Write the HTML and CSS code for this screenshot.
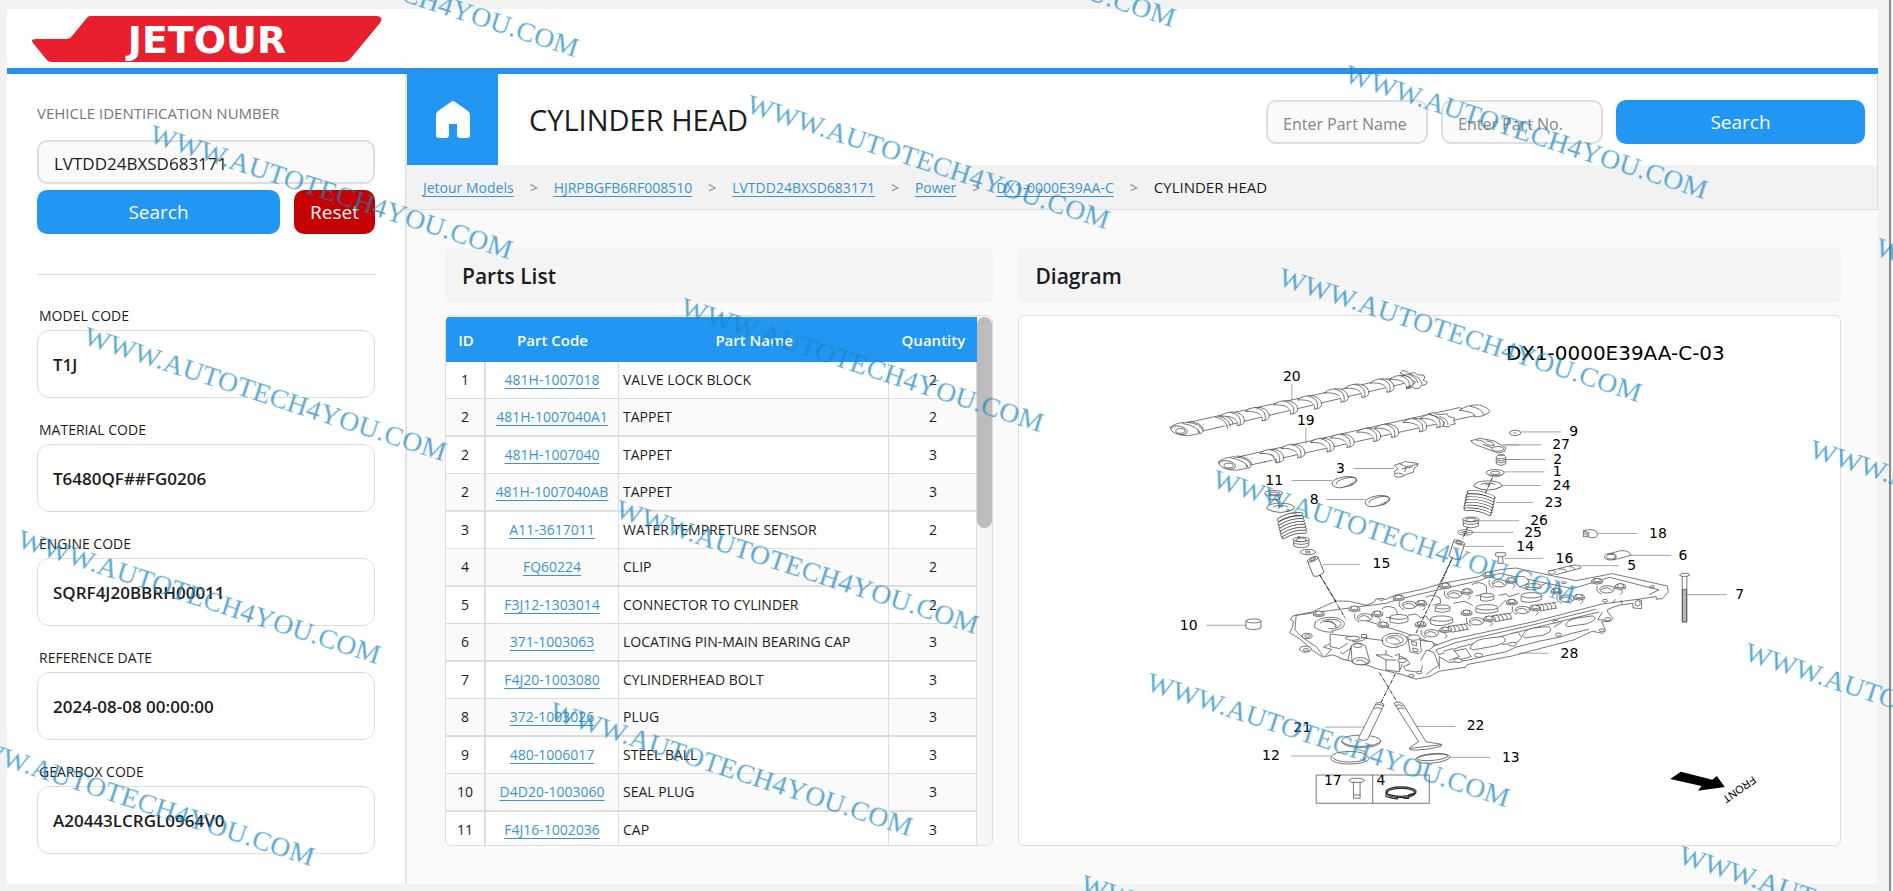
FILE: index.html
```html
<!DOCTYPE html>
<html lang="en">
<head>
<meta charset="utf-8">
<meta name="viewport" content="width=device-width, initial-scale=1">
<title>CYLINDER HEAD - Jetour</title>
<link rel="stylesheet" href="styles.css">
</head>
<body>
<div class="window">
<div class="app">
  <header class="brand">
    <svg class="logo" viewBox="0 0 350 46" role="img" aria-label="Jetour">
      <path d="M58 0H345Q352 1 348 7L319 42Q316 46 311 46H19Q16 46 14 43L1 27Q-2 23 4 23H35Q38 23 40 20L54 3Q56 0 58 0Z" fill="#e8202e"/>
      <text x="175" y="37" text-anchor="middle">JETOUR</text>
    </svg>
  </header>

  <div class="columns">
    <aside class="sidebar">
      <form class="vin">
        <label class="vin-label" for="vin">VEHICLE IDENTIFICATION NUMBER</label>
        <input class="field" id="vin" type="text" value="LVTDD24BXSD683171">
        <div class="vin-actions">
          <button class="btn" type="button">Search</button>
          <button class="btn btn-reset" type="button">Reset</button>
        </div>
      </form>
      <hr class="rule">
      <dl class="specs">
        <div><dt>MODEL CODE</dt><dd>T1J</dd></div>
        <div><dt>MATERIAL CODE</dt><dd>T6480QF##FG0206</dd></div>
        <div><dt>ENGINE CODE</dt><dd>SQRF4J20BBRH00011</dd></div>
        <div><dt>REFERENCE DATE</dt><dd>2024-08-08 00:00:00</dd></div>
        <div><dt>GEARBOX CODE</dt><dd>A20443LCRGL0964V0</dd></div>
      </dl>
    </aside>

    <main class="main">
      <div class="titlebar">
        <a class="home" href="#" aria-label="Home">
          <svg viewBox="0 0 34 38" aria-hidden="true"><path d="M15 1Q17-1 19 1L32 10Q34 12 34 14V34Q34 37 31 37H24Q21 37 21 34V23H13V34Q13 37 10 37H3Q0 37 0 34V14Q0 12 2 10Z" fill="#fff"/></svg>
        </a>
        <h1>CYLINDER HEAD</h1>
        <form class="part-search">
          <input class="field" type="text" placeholder="Enter Part Name" aria-label="Enter Part Name">
          <input class="field" type="text" placeholder="Enter Part No." aria-label="Enter Part No.">
          <button class="btn" type="button">Search</button>
        </form>
      </div>

      <nav class="crumbs" aria-label="Breadcrumb">
        <a href="#">Jetour Models</a><span class="sep">&gt;</span>
        <a href="#">HJRPBGFB6RF008510</a><span class="sep">&gt;</span>
        <a href="#">LVTDD24BXSD683171</a><span class="sep">&gt;</span>
        <a href="#">Power</a><span class="sep">&gt;</span>
        <a href="#">DX1-0000E39AA-C</a><span class="sep">&gt;</span>
        <span class="current">CYLINDER HEAD</span>
      </nav>

      <div class="panels">
        <section class="panel">
          <h2>Parts List</h2>
          <div class="box parts">
            <div class="table-wrap">
              <table>
                <colgroup><col class="c-id"><col class="c-code"><col><col class="c-qty"></colgroup>
                <thead><tr><th>ID</th><th>Part Code</th><th>Part Name</th><th>Quantity</th></tr></thead>
                <tbody>
                  <tr><td>1</td><td><a href="#">481H-1007018</a></td><td>VALVE LOCK BLOCK</td><td>2</td></tr>
                  <tr><td>2</td><td><a href="#">481H-1007040A1</a></td><td>TAPPET</td><td>2</td></tr>
                  <tr><td>2</td><td><a href="#">481H-1007040</a></td><td>TAPPET</td><td>3</td></tr>
                  <tr><td>2</td><td><a href="#">481H-1007040AB</a></td><td>TAPPET</td><td>3</td></tr>
                  <tr><td>3</td><td><a href="#">A11-3617011</a></td><td>WATER TEMPRETURE SENSOR</td><td>2</td></tr>
                  <tr><td>4</td><td><a href="#">FQ60224</a></td><td>CLIP</td><td>2</td></tr>
                  <tr><td>5</td><td><a href="#">F3J12-1303014</a></td><td>CONNECTOR TO CYLINDER</td><td>2</td></tr>
                  <tr><td>6</td><td><a href="#">371-1003063</a></td><td>LOCATING PIN-MAIN BEARING CAP</td><td>3</td></tr>
                  <tr><td>7</td><td><a href="#">F4J20-1003080</a></td><td>CYLINDERHEAD BOLT</td><td>3</td></tr>
                  <tr><td>8</td><td><a href="#">372-1003026</a></td><td>PLUG</td><td>3</td></tr>
                  <tr><td>9</td><td><a href="#">480-1006017</a></td><td>STEEL BALL</td><td>3</td></tr>
                  <tr><td>10</td><td><a href="#">D4D20-1003060</a></td><td>SEAL PLUG</td><td>3</td></tr>
                  <tr><td>11</td><td><a href="#">F4J16-1002036</a></td><td>CAP</td><td>3</td></tr>
                </tbody>
              </table>
            </div>
            <div class="scrollbar"><div class="thumb"></div></div>
          </div>
        </section>

        <section class="panel">
          <h2>Diagram</h2>
          <div class="box diagram">
            <svg viewBox="3057 948 2466 1587" role="img" aria-label="Exploded view of the cylinder head">
              <defs>
                <g id="lobe"><path d="M-38-6Q-20-22 10-18Q36-10 34 10Q32 20 12 22Q18 10 4 1Q-10-8-38-6Z"/><path d="M-8-18Q20-12 22 6Q24 14 20 20"/></g>
                <g id="cap"><path d="M-16 0V7Q0 14 16 7V0"/><ellipse rx="16" ry="6"/><ellipse rx="9" ry="3"/><path d="M-9 2V-5Q0-9 9-5V2"/></g>
                <g id="bore"><ellipse rx="22" ry="11"/><path d="M-19 2Q-10-6 0-5Q14-3 16 7"/><path d="M-30-10Q-34 8-16 14M20-8L38-2L48 8L40 16"/></g>
                <g id="spring"><path d="M-28-36Q0-50 28-36Q34-30 28-26Q0-38-26-26Q-34-28-28-36ZM-28-24Q0-38 28-26M-28-14Q2-28 28-16M-28-4Q2-18 28-6M-28 6Q2-8 28 4M-28 16Q2 2 28 14M-28 26Q2 12 28 24M-26 34Q2 22 26 34M-28-24Q-34-16-28-14M28-26Q34-18 28-16M-28-14Q-34-6-28-4M28-16Q34-8 28-6M-28-4Q-34 4-28 6M28-6Q34 2 28 4M-28 6Q-34 14-28 16M28 4Q34 12 28 14M-28 16Q-34 24-28 26M28 14Q34 22 28 24M-28 26Q-32 32-26 34M28 24Q32 30 26 34"/></g>
                <g id="washer"><ellipse rx="41" ry="13"/><ellipse rx="22" ry="6"/><ellipse rx="7" ry="3"/><path d="M-41 0V4Q0 26 41 4V0"/></g>
                <g id="small-ring"><ellipse rx="23" ry="8"/><ellipse rx="8" ry="3"/></g>
                <g id="seal"><path d="M-24-8L-22 12Q0 22 22 12L24-8"/><ellipse cy="-8" rx="24" ry="7"/><ellipse cy="-8" rx="14" ry="4"/><path d="M-18-6Q0 4 18-6M-23 2Q0 12 23 2"/></g>
                <g id="ring"><ellipse rx="38" ry="15" transform="rotate(-9)"/><ellipse cx="5" cy="1" rx="31" ry="11" transform="rotate(-14)"/><path d="M-36 8Q-32 18-12 18L26 8"/></g>
                <g id="coil"><path d="M-30-8Q-18-2-22 10M-20-10Q-6-4-10 8M-8-10Q6-4 2 7M4-12Q18-6 14 5M16-14Q30-8 26 3M-32-6L28-15M-22 11L30 2"/></g>
              </defs>

              <!-- camshafts, springs and rings -->
              <g class="ink" transform="translate(3360 960)">
                <path d="M180 312L870 162L910 176L200 344Z"/>
                <path d="M325 417L1020 262L1085 282L340 446Z"/>
                <g id="shaft-nose"><path d="M150 322Q166 308 196 306L210 310Q236 318 238 340L206 346Q170 348 150 322Z"/><ellipse cx="178" cy="330" rx="25" ry="12" transform="rotate(12 178 330)"/><ellipse cx="182" cy="332" rx="14" ry="7"/><path d="M196 306Q246 308 250 334L242 341Q236 318 188 309M206 303Q244 306 252 328M286 290Q320 296 324 325M294 287Q330 294 332 320M306 284Q340 292 340 314M252 310v3M290 320v3"/></g>
                <use href="#shaft-nose" x="145" y="104"/>
                <use href="#lobe" x="340" y="294"/><use href="#lobe" x="415" y="280"/><use href="#lobe" x="500" y="260"/><use href="#lobe" x="572" y="245"/><use href="#lobe" x="652" y="224"/><use href="#lobe" x="714" y="210"/><use href="#lobe" x="790" y="194"/><use href="#lobe" x="848" y="184"/>
                <path d="M842 158l8-8 14 4 4 5 18-2 8 6 20 2 3 8-6 6 13 6-5 8-14 2-4 8-14 2-8-6-17 2Q900 190 884 176Z"/><path d="M858 160Q890 166 896 188M870 160Q904 170 908 192"/>
                <use href="#lobe" x="458" y="406"/><use href="#lobe" x="522" y="391"/><use href="#lobe" x="610" y="373"/><use href="#lobe" x="670" y="360"/><use href="#lobe" x="750" y="342"/><use href="#lobe" x="804" y="330"/><use href="#lobe" x="888" y="313"/><use href="#lobe" x="940" y="301"/>
                <path d="M928 280l14-3 12 6 30-2 4 8 18 4-3 8 6 10-14 2-6 7-18-2Q990 300 928 280Z"/><path d="M960 288Q988 298 986 314"/>
                <path d="M1020 270Q1046 252 1080 254Q1108 262 1112 274Q1096 290 1064 290Q1076 276 1020 270ZM1052 258Q1090 264 1094 284"/>
                <path class="lead" d="M517 192V242M559 321V372M702 445H825M516 481H638M620 538H738M610 733H722M1152 374H1200M1160 418H1200"/>
                <path d="M825 435L848 428L856 424L896 430L894 438L884 444L882 456L862 462L850 468L830 464L824 454L836 446ZM840 430L860 440L896 432M860 440L856 456M848 446L880 440"/><ellipse cx="838" cy="465" rx="14" ry="6"/>
                <use href="#ring" x="675" y="485"/><use href="#ring" x="774" y="542"/>
                <path d="M436 520L448 538H478L488 520"/><ellipse cx="462" cy="519" rx="27" ry="8"/><ellipse cx="462" cy="520" rx="13" ry="4"/>
                <use href="#washer" x="483" y="562"/><use href="#spring" transform="translate(518 618) rotate(-14) scale(1.3 .9)"/><use href="#seal" x="545" y="666"/><use href="#small-ring" x="565" y="696"/>
                <g transform="translate(588 738) rotate(-22)"><path d="M-17-22V26Q0 36 17 26V-22"/><ellipse cy="-22" rx="17" ry="6"/><ellipse cy="-22" rx="10" ry="3"/></g>
                <path d="M1054 362L1082 354L1124 362L1160 382L1156 394L1136 398L1098 384L1070 374ZM1070 360Q1092 358 1104 374L1126 376Q1124 364 1100 362M1090 372L1140 390"/><ellipse cx="1136" cy="386" rx="18" ry="7"/>
                <path d="M1131 412V430Q1146 440 1160 430V412"/><ellipse cx="1146" cy="410" rx="14" ry="6"/><path d="M1131 418Q1146 426 1160 418M1131 424Q1146 432 1160 424M1138 404h16"/>
                <path d="M1102 458L1114 468H1142L1154 458"/><ellipse cx="1128" cy="457" rx="27" ry="9"/><ellipse cx="1128" cy="458" rx="14" ry="5"/>
                <use href="#washer" x="1106" y="495"/><use href="#spring" transform="translate(1080 550) rotate(12) scale(1.4 .86)"/><use href="#seal" x="1055" y="606"/><use href="#small-ring" x="1038" y="637"/>
                <g transform="translate(1013 688) rotate(18)"><path d="M-17-22V26Q0 34 17 26V-22"/><ellipse cy="-22" rx="17" ry="6"/><ellipse cy="-22" rx="10" ry="3"/></g>
                <path class="axis" d="M468 536L478 552M538 648V656M1120 472L1098 520M1046 620L1030 656M1000 712L930 870M600 764L672 880"/>
              </g>

              <!-- bolts, sleeves and pins on the right -->
              <g class="ink" transform="translate(4440 960)">
                <path class="lead" d="M126 335H246M76 374H186M80 418H198M72 455H196M66 496H186M50 547H162M-20 602H120M-58 637H102M-44 679H75M76 715H192M300 737H420M356 640H474M456 706H576M622 824H744"/>
                <ellipse cx="108" cy="338" rx="17" ry="8"/><path d="M104 337l8 3"/>
                <path d="M50 698H78L80 706L70 710L72 730H56L58 710L48 706ZM58 710H70"/>
                <path d="M207 754L278 736Q300 732 306 744L230 764M240 748Q262 744 262 756M270 740Q282 738 288 748"/><ellipse cx="218" cy="757" rx="11" ry="6"/>
                <path d="M313 632V650H328M313 632Q340 624 352 634Q360 646 350 652Q336 656 328 650M313 632L330 638L328 650M318 636v10M324 638v10"/>
                <path d="M380 704L424 692Q452 690 456 706L402 720"/><ellipse cx="394" cy="710" rx="18" ry="10"/><ellipse cx="396" cy="710" rx="13" ry="7"/>
                <path d="M602 766L608 760H628L632 766L624 769H610ZM610 769V906H624V769"/><path d="M611 808H623V906H611Z" fill="#bbb"/>
              </g>

              <!-- cylinder head casting, valves and seats -->
              <g class="ink" transform="translate(3660 1620)">
                <path d="M220 228L278 216L320 196L352 183L390 184L440 196L465 186L470 177L500 178L530 165L612 147L668 130L780 110L800 98L850 88L890 84L1070 122L1180 101L1345 138L1348 156L1330 176L1312 178V170L1256 178L1268 182V206L1242 204V190L1200 196L1166 208V216L1182 236L1174 244L1148 246L1160 272L1150 280L1120 274L1064 300L985 320L880 348L744 374L740 382L660 394L630 410L590 418L548 404L470 386L450 378L380 360L340 345L310 352L280 332L240 296L210 278L218 264L222 244L212 238Z"/>
                <path d="M230 226L226 270L248 292L292 322L310 348M230 226L330 212L500 190L530 180L620 158L780 122L840 100L1060 146L1172 112L1320 150L1290 164M332 282L640 320L700 298L940 246L1150 192L1256 178M440 242L560 280L655 315M332 282V320L360 326L385 310M650 330L658 345L720 322L945 264L1140 216M650 330L710 308L945 254L1130 208"/>
                <path d="M660 350L660 388M560 290L590 300L640 306L645 318L630 330L640 350L616 352L604 398L560 392L552 380L572 372L560 356L540 348M470 345L500 360V390L540 396L548 372M500 360L560 362M470 345H500M400 320L370 342L362 336M360 355L385 362L395 320M318 348L336 328L312 322L330 312"/>
                <path d="M395 318Q412 300 438 318L452 368Q430 382 398 368Z"/><ellipse cx="423" cy="364" rx="24" ry="11"/><ellipse cx="415" cy="317" rx="13" ry="6"/><path d="M410 364Q424 354 440 370"/>
                <ellipse cx="332" cy="252" rx="43" ry="20"/><ellipse cx="334" cy="252" rx="31" ry="14"/><path d="M312 246Q336 236 352 258M320 244Q344 244 350 264M288 242L285 262Q310 280 344 276"/>
                <ellipse cx="526" cy="300" rx="38" ry="20"/><ellipse cx="526" cy="300" rx="26" ry="13"/><path d="M508 296Q528 286 544 308M490 300V312Q506 326 536 322"/>
                <path d="M566 294L572 336L598 342L606 334L602 296ZM576 304L592 308V318L578 314ZM580 324L596 328V336L582 334Z"/><ellipse cx="584" cy="293" rx="19" ry="8"/>
                <path d="M400 290V306L430 302L442 290M426 284H442V294H426ZM500 330V344L520 352M526 348L540 342V392M604 362L622 330L644 338L658 376L620 404"/><ellipse cx="400" cy="295" rx="22" ry="6"/>
                <ellipse cx="263" cy="288" rx="15" ry="8"/><ellipse cx="264" cy="288" rx="8" ry="4"/><ellipse cx="258" cy="328" rx="18" ry="9"/><ellipse cx="260" cy="330" rx="9" ry="4"/><ellipse cx="600" cy="398" rx="8" ry="4"/><ellipse cx="576" cy="408" rx="9" ry="4"/><ellipse cx="548" cy="362" rx="13" ry="6"/>
                <path d="M752 326Q760 302 796 296L848 290Q862 294 856 306Q846 316 806 322L762 330ZM910 288Q914 270 944 264L988 260Q1000 264 992 276L972 286L918 294ZM1040 256Q1042 240 1076 234L1120 228Q1134 232 1124 242L1102 252L1046 260ZM672 334L700 326L720 350L690 362M704 334L740 326L756 350L720 360M872 282L896 276L908 294L890 310L850 314M1004 262L1030 246M658 350L690 368L740 362L800 348L860 336L890 322L960 304L1020 292L1060 280L1110 268M1150 216L1136 240L1170 240M1180 190L1190 178M1206 180L1210 194"/>
                <ellipse cx="716" cy="362" rx="12" ry="6"/><ellipse cx="778" cy="346" rx="12" ry="6"/><ellipse cx="880" cy="313" rx="12" ry="6"/><ellipse cx="1010" cy="245" rx="9" ry="4"/><ellipse cx="1018" cy="284" rx="9" ry="5"/><ellipse cx="1166" cy="238" rx="9" ry="5"/><ellipse cx="1148" cy="271" rx="8" ry="4"/><ellipse cx="1256" cy="190" rx="8" ry="8"/><ellipse cx="1158" cy="182" rx="8" ry="4"/><ellipse cx="1034" cy="128" rx="7" ry="3"/><ellipse cx="1300" cy="140" rx="7" ry="3"/><ellipse cx="486" cy="178" rx="8" ry="3"/>
                <use href="#bore" x="436" y="232"/><use href="#bore" x="570" y="195"/><use href="#bore" x="706" y="163"/><use href="#bore" x="840" y="130"/><use href="#bore" x="636" y="280"/><use href="#bore" x="772" y="244"/><use href="#bore" x="910" y="210"/><use href="#bore" x="1044" y="176"/><use href="#bore" x="1164" y="148"/>
                <path d="M486 208Q500 194 526 204Q540 220 528 236L500 232M620 172Q640 160 662 174L664 190L640 196M758 134Q780 120 802 138V160L770 168M896 110Q924 104 930 128L900 142M512 230V246Q540 256 566 244V232M648 202V214Q668 222 692 212V202M634 236V252Q664 264 700 248V236M784 168V180Q800 188 824 178V168M770 204V216Q800 226 836 214V202M906 168V184Q936 192 968 178V166M920 140V148Q944 154 966 144V136M838 166L860 162L870 170L900 160M702 190L736 184L760 196M566 226L590 222L604 234L620 228L632 244M840 200L860 180M968 136L984 128L1000 146"/>
                <ellipse cx="539" cy="231" rx="27" ry="7"/><ellipse cx="670" cy="201" rx="22" ry="6"/><ellipse cx="667" cy="236" rx="33" ry="8"/><ellipse cx="804" cy="166" rx="20" ry="6"/><ellipse cx="803" cy="202" rx="33" ry="8"/><ellipse cx="937" cy="166" rx="31" ry="8"/><ellipse cx="943" cy="137" rx="23" ry="6"/>
                <use href="#cap" x="298" y="220"/><use href="#cap" x="405" y="205"/><use href="#cap" x="474" y="220"/><use href="#cap" x="538" y="172"/><use href="#cap" x="606" y="188"/><use href="#cap" x="678" y="136"/><use href="#cap" x="743" y="153"/><use href="#cap" x="808" y="103"/><use href="#cap" x="876" y="120"/><use href="#cap" x="492" y="253"/><use href="#cap" x="604" y="252"/><use href="#cap" x="678" y="268"/><use href="#cap" x="742" y="217"/><use href="#cap" x="810" y="235"/><use href="#cap" x="878" y="185"/><use href="#cap" x="948" y="202"/><use href="#cap" x="1012" y="152"/><use href="#cap" x="1080" y="170"/><use href="#cap" x="1134" y="122"/><use href="#cap" x="1204" y="138"/>
                <use href="#coil" x="718" y="266"/><use href="#coil" x="850" y="234"/><use href="#coil" x="984" y="202"/>
                <path d="M79 242V264Q102 274 124 264V242"/><ellipse cx="102" cy="243" rx="22" ry="6"/>
                <path class="lead" d="M-40 256H79M900 340H988M316 562H435M590 560H708M215 649H334M692 653H812"/>
                <path class="axis" d="M302 106L378 236M696 60L590 280M480 398L534 488M528 402L484 490"/>
                <path d="M366 604Q372 586 425 586Q480 588 485 604Q482 622 425 624Q370 622 366 604ZM366 604Q380 620 425 620Q474 618 485 604"/><path d="M470 490L416 598Q430 604 444 600L494 494Q484 484 470 490ZM468 496Q480 490 492 498M464 506Q476 500 488 508"/>
                <path d="M524 490L598 606L570 624L572 630Q610 634 664 620L668 614L620 606L552 494Q538 482 524 490ZM572 626Q620 620 666 615M528 498Q540 490 552 500M534 508Q544 500 556 508"/>
                <ellipse cx="391" cy="657" rx="57" ry="16"/><ellipse cx="391" cy="653" rx="50" ry="14"/><path d="M334 653Q340 636 391 635Q440 636 448 653"/><ellipse cx="640" cy="656" rx="52" ry="14" transform="rotate(-5 640 656)"/><ellipse cx="640" cy="653" rx="46" ry="9" transform="rotate(-5 640 653)"/>
                <path d="M290 706H630V791H290ZM460 706V791"/><path d="M388 722L398 716H424L436 722L428 728H396ZM402 728V776H422V728M402 766H422"/>
                <g class="heavy"><ellipse cx="545" cy="756" rx="45" ry="14"/><ellipse cx="545" cy="760" rx="42" ry="14"/><path d="M500 756V770L520 776L534 778V768M552 776H568V766L588 760"/></g>
              </g>

              <path d="M5046 2316L5140 2340L5154 2329L5178 2362L5097 2373L5108 2359L5014 2338Z" fill="#000"/>
              <text class="front" transform="translate(5262 2328) rotate(145)">FRONT</text>

              <g class="num">
                <text class="sheet" x="4849" y="1080">DX1-0000E39AA-C-03</text>
                <text x="3877" y="1143">20</text><text x="3919" y="1273">19</text><text x="4023" y="1419">3</text><text x="3824" y="1456">11</text><text x="3944" y="1513">8</text><text x="4146" y="1705">15</text>
                <text x="4724" y="1307">9</text><text x="4686" y="1346">27</text><text x="4676" y="1391">2</text><text x="4674" y="1429">1</text><text x="4688" y="1471">24</text><text x="4663" y="1521">23</text><text x="4620" y="1575">26</text><text x="4602" y="1612">25</text><text x="4578" y="1653">14</text><text x="4696" y="1688">16</text><text x="4898" y="1710">5</text><text x="5052" y="1679">6</text><text x="4977" y="1613">18</text><text x="5223" y="1796">7</text>
                <text x="3567" y="1890">10</text><text x="4711" y="1974">28</text><text x="3909" y="2196">21</text><text x="4429" y="2192">22</text><text x="3814" y="2281">12</text><text x="4535" y="2287">13</text><text x="4000" y="2357">17</text><text x="4145" y="2357">4</text>
              </g>
            </svg>
          </div>
        </section>
      </div>
    </main>
  </div>
</div>
</div>

<svg class="watermark" aria-hidden="true">
  <g>
    <text transform="translate(214 -60) rotate(18)">WWW.AUTOTECH4YOU.COM</text>
    <text transform="translate(148 142) rotate(18)">WWW.AUTOTECH4YOU.COM</text>
    <text transform="translate(82 344) rotate(18)">WWW.AUTOTECH4YOU.COM</text>
    <text transform="translate(16 547) rotate(18)">WWW.AUTOTECH4YOU.COM</text>
    <text transform="translate(-50 749) rotate(18)">WWW.AUTOTECH4YOU.COM</text>
    <text transform="translate(811 -90) rotate(18)">WWW.AUTOTECH4YOU.COM</text>
    <text transform="translate(745 112) rotate(18)">WWW.AUTOTECH4YOU.COM</text>
    <text transform="translate(679 315) rotate(18)">WWW.AUTOTECH4YOU.COM</text>
    <text transform="translate(614 517) rotate(18)">WWW.AUTOTECH4YOU.COM</text>
    <text transform="translate(548 719) rotate(18)">WWW.AUTOTECH4YOU.COM</text>
    <text transform="translate(1343 82) rotate(18)">WWW.AUTOTECH4YOU.COM</text>
    <text transform="translate(1277 285) rotate(18)">WWW.AUTOTECH4YOU.COM</text>
    <text transform="translate(1211 487) rotate(18)">WWW.AUTOTECH4YOU.COM</text>
    <text transform="translate(1145 690) rotate(18)">WWW.AUTOTECH4YOU.COM</text>
    <text transform="translate(1079 892) rotate(18)">WWW.AUTOTECH4YOU.COM</text>
    <text transform="translate(1874 255) rotate(18)">WWW.AUTOTECH4YOU.COM</text>
    <text transform="translate(1808 457) rotate(18)">WWW.AUTOTECH4YOU.COM</text>
    <text transform="translate(1743 660) rotate(18)">WWW.AUTOTECH4YOU.COM</text>
    <text transform="translate(1677 863) rotate(18)">WWW.AUTOTECH4YOU.COM</text>
  </g>
</svg>
</body>
</html>
```

FILE: styles.css
```css
* { box-sizing: border-box; }
body {
  margin: 0;
  background: #f2f2f2;
  color: #1c1c1c;
  font-family: "Open Sans", "Noto Sans", sans-serif;
  font-size: 14px;
  position: relative;
}
a { color: #3a94d0; text-underline-offset: 3px; }
h1, h2, dl, dd { margin: 0; }

.window {
  min-height: 100vh;
  margin-right: 2px;
  padding: 9px 11px 7px 7px;
  border-right: 2px solid #8c8c8c;
  display: flex;
}
.app { flex: 1; display: flex; flex-direction: column; min-width: 0; }

.brand {
  display: flex;
  padding: 7px 25px 6px;
  background: #fff;
  border-bottom: 6px solid #2893ed;
}
.logo { width: 350px; height: 46px; }
.logo text { font: bold 38px "DejaVu Sans", sans-serif; fill: #fff; }

.columns { flex: 1; display: grid; grid-template-columns: 400px minmax(0, 1fr); }

.sidebar { background: #fff; border-right: 2px solid #e4e4e4; padding: 26px 30px 24px; }
.vin { display: flex; flex-direction: column; }
.vin-label { font-size: 15px; line-height: 26px; color: #757575; margin-bottom: 14px; }
.field {
  height: 44px;
  min-width: 0;
  padding: 2px 15px 0;
  border: 2px solid #ddd;
  border-radius: 10px;
  background: #fafafa;
  color: #1c1c1c;
  font: 17px "Open Sans", "Noto Sans", sans-serif;
}
.field::placeholder { color: #858585; opacity: 1; }
.vin-actions { display: grid; grid-template-columns: 3fr 1fr; gap: 14px; margin-top: 6px; }
.btn {
  height: 44px;
  padding: 0;
  border: 0;
  border-radius: 10px;
  background: #2196f3;
  color: #fff;
  font: 19px "Open Sans", "Noto Sans", sans-serif;
}
.btn-reset { background: #c40000; }
.rule { margin: 40px 0 27px; border: 0; border-top: 1px solid #dcdcdc; }
.specs { display: grid; gap: 18px; }
.specs dt { padding-left: 2px; font-size: 14px; line-height: 28px; }
.specs dd {
  height: 68px;
  padding: 0 15px;
  border: 1px solid #ddd;
  border-radius: 12px;
  font-size: 17px;
  font-weight: 600;
  line-height: 68px;
}

.main { display: flex; flex-direction: column; background: #fafafa; min-width: 0; }
.titlebar { display: flex; align-items: center; background: #fff; padding-right: 12px; border-right: 1px solid #ddd; }
.home { display: flex; align-items: center; justify-content: center; width: 91px; height: 91px; background: #2196f3; }
.home svg { width: 34px; height: 38px; }
h1 { flex: 1; padding-left: 31px; font-size: 29px; font-weight: 400; }
.part-search { display: grid; grid-template-columns: 162px 162px 249px; gap: 13px; padding-top: 4px; }
.part-search .field { padding-top: 4px; font-size: 16px; }

.crumbs {
  display: flex;
  align-items: center;
  height: 45px;
  padding: 0 16px;
  background: #f2f2f2;
  border-bottom: 1px solid #ddd;
  border-right: 1px solid #ddd;
}
.sep { padding: 0 16px; color: #888; }
.current { font-size: 15px; }

.panels { flex: 1; display: grid; grid-template-columns: 2fr 3fr; gap: 25px; padding: 38px 37px 38px 38px; }
.panel { display: flex; flex-direction: column; gap: 13px; min-width: 0; }
h2 { padding: 2px 17px 0; font-size: 21px; font-weight: 600; line-height: 52px; background: #f4f4f4; border-radius: 5px; }
.box { flex: 1 1 0px; min-height: 480px; border: 1px solid #ddd; border-radius: 6px; background: #fff; overflow: hidden; }

.parts { display: flex; padding-top: 1px; contain: size; }
.table-wrap { flex: 1; overflow: hidden; }
table { width: 100%; border-collapse: separate; border-spacing: 0; table-layout: fixed; }
.c-id { width: 40px; }
.c-code { width: 133px; }
.c-qty { width: 88px; }
th { height: 45px; padding: 0; background: #2196f3; color: #fff; font-size: 15px; font-weight: 600; }
td { height: 37px; padding: 0 0 2px; text-align: center; border-right: 1px solid #ddd; border-bottom: 1px solid #ddd; white-space: nowrap; }
td:first-child { border-right-width: 2px; }
td:nth-child(3) { padding-left: 4px; text-align: left; }
tbody tr:nth-child(even) td { height: 38px; background: #fafafa; border-bottom-width: 2px; }
.scrollbar { width: 15px; background: #f5f5f5; }
.thumb { height: 40%; border-radius: 8px; background: #bcbcbc; }

.diagram { contain: size; }
.diagram svg { display: block; width: 100%; height: 100%; }
.ink { fill: #fff; stroke: #333; stroke-width: 2; stroke-linejoin: round; }
.ink .lead { fill: none; stroke: #777; }
.ink .axis { fill: none; stroke-width: 3; stroke-dasharray: 12 3 3 3; }
.ink .heavy { fill: none; stroke-width: 4; }
.num text { font: 42px "DejaVu Sans", sans-serif; text-anchor: middle; }
.num .sheet { font-size: 60px; }
.front { font: 33px "Liberation Sans", sans-serif; }

.watermark { position: absolute; inset: 0; width: 100%; height: 100%; overflow: hidden; pointer-events: none; }
.watermark g { opacity: .7; fill: #1a87c2; }
.watermark text { font: 28px "Liberation Serif", serif; }
```
